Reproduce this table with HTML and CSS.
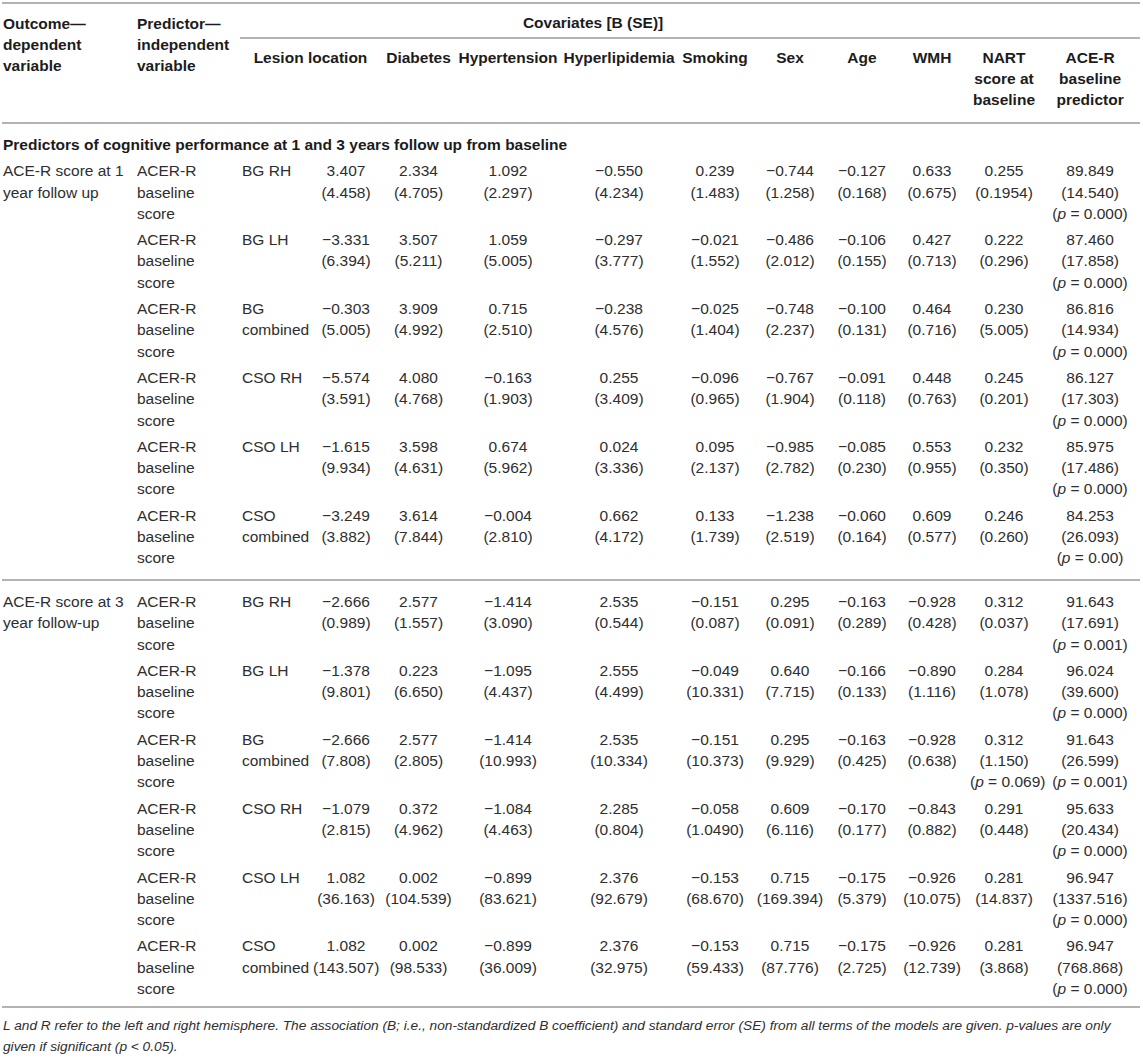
FILE: index.html
```html
<!DOCTYPE html>
<html lang="en">
<head>
<meta charset="utf-8">
<title>Predictors of cognitive performance</title>
<link rel="stylesheet" href="styles.css">
</head>
<body>
<div class="wrap">
<table class="data">
<colgroup>
<col class="c1"><col class="c2"><col class="c3"><col class="c4"><col class="c5"><col class="c6"><col class="c7"><col class="c8"><col class="c9"><col class="c10"><col class="c11"><col class="c12"><col class="c13">
</colgroup>
<thead>
<tr>
<th rowspan="2" class="h-left first">Outcome—<br>dependent<br>variable</th>
<th rowspan="2" class="h-left">Predictor—<br>independent<br>variable</th>
<th colspan="11" class="h-cov">Covariates [B (SE)]</th>
</tr>
<tr class="h-sub">
<th colspan="2">Lesion location</th>
<th>Diabetes</th>
<th>Hypertension</th>
<th>Hyperlipidemia</th>
<th>Smoking</th>
<th>Sex</th>
<th>Age</th>
<th>WMH</th>
<th>NART<br>score at<br>baseline</th>
<th>ACE-R<br>baseline<br>predictor</th>
</tr>
</thead>
<tbody>
<tr><td colspan="13" class="section first">Predictors of cognitive performance at 1 and 3 years follow up from baseline</td></tr>
<tr>
<td class="first">ACE-R score at 1<br>year follow up</td><td>ACER-R<br>baseline<br>score</td><td>BG RH</td>
<td class="num">3.407<br>(4.458)</td><td class="num">2.334<br>(4.705)</td><td class="num">1.092<br>(2.297)</td><td class="num">−0.550<br>(4.234)</td><td class="num">0.239<br>(1.483)</td><td class="num">−0.744<br>(1.258)</td><td class="num">−0.127<br>(0.168)</td><td class="num">0.633<br>(0.675)</td><td class="num">0.255<br>(0.1954)</td><td class="num">89.849<br>(14.540)<br>(<i>p</i> = 0.000)</td>
</tr>
<tr>
<td class="first"></td><td>ACER-R<br>baseline<br>score</td><td>BG LH</td>
<td class="num">−3.331<br>(6.394)</td><td class="num">3.507<br>(5.211)</td><td class="num">1.059<br>(5.005)</td><td class="num">−0.297<br>(3.777)</td><td class="num">−0.021<br>(1.552)</td><td class="num">−0.486<br>(2.012)</td><td class="num">−0.106<br>(0.155)</td><td class="num">0.427<br>(0.713)</td><td class="num">0.222<br>(0.296)</td><td class="num">87.460<br>(17.858)<br>(<i>p</i> = 0.000)</td>
</tr>
<tr>
<td class="first"></td><td>ACER-R<br>baseline<br>score</td><td>BG<br>combined</td>
<td class="num">−0.303<br>(5.005)</td><td class="num">3.909<br>(4.992)</td><td class="num">0.715<br>(2.510)</td><td class="num">−0.238<br>(4.576)</td><td class="num">−0.025<br>(1.404)</td><td class="num">−0.748<br>(2.237)</td><td class="num">−0.100<br>(0.131)</td><td class="num">0.464<br>(0.716)</td><td class="num">0.230<br>(5.005)</td><td class="num">86.816<br>(14.934)<br>(<i>p</i> = 0.000)</td>
</tr>
<tr>
<td class="first"></td><td>ACER-R<br>baseline<br>score</td><td>CSO RH</td>
<td class="num">−5.574<br>(3.591)</td><td class="num">4.080<br>(4.768)</td><td class="num">−0.163<br>(1.903)</td><td class="num">0.255<br>(3.409)</td><td class="num">−0.096<br>(0.965)</td><td class="num">−0.767<br>(1.904)</td><td class="num">−0.091<br>(0.118)</td><td class="num">0.448<br>(0.763)</td><td class="num">0.245<br>(0.201)</td><td class="num">86.127<br>(17.303)<br>(<i>p</i> = 0.000)</td>
</tr>
<tr>
<td class="first"></td><td>ACER-R<br>baseline<br>score</td><td>CSO LH</td>
<td class="num">−1.615<br>(9.934)</td><td class="num">3.598<br>(4.631)</td><td class="num">0.674<br>(5.962)</td><td class="num">0.024<br>(3.336)</td><td class="num">0.095<br>(2.137)</td><td class="num">−0.985<br>(2.782)</td><td class="num">−0.085<br>(0.230)</td><td class="num">0.553<br>(0.955)</td><td class="num">0.232<br>(0.350)</td><td class="num">85.975<br>(17.486)<br>(<i>p</i> = 0.000)</td>
</tr>
<tr class="group-end">
<td class="first"></td><td>ACER-R<br>baseline<br>score</td><td>CSO<br>combined</td>
<td class="num">−3.249<br>(3.882)</td><td class="num">3.614<br>(7.844)</td><td class="num">−0.004<br>(2.810)</td><td class="num">0.662<br>(4.172)</td><td class="num">0.133<br>(1.739)</td><td class="num">−1.238<br>(2.519)</td><td class="num">−0.060<br>(0.164)</td><td class="num">0.609<br>(0.577)</td><td class="num">0.246<br>(0.260)</td><td class="num">84.253<br>(26.093)<br>(<i>p</i> = 0.00)</td>
</tr>
</tbody>
<tbody>
<tr class="group-start">
<td class="first">ACE-R score at 3<br>year follow-up</td><td>ACER-R<br>baseline<br>score</td><td>BG RH</td>
<td class="num">−2.666<br>(0.989)</td><td class="num">2.577<br>(1.557)</td><td class="num">−1.414<br>(3.090)</td><td class="num">2.535<br>(0.544)</td><td class="num">−0.151<br>(0.087)</td><td class="num">0.295<br>(0.091)</td><td class="num">−0.163<br>(0.289)</td><td class="num">−0.928<br>(0.428)</td><td class="num">0.312<br>(0.037)</td><td class="num">91.643<br>(17.691)<br>(<i>p</i> = 0.001)</td>
</tr>
<tr>
<td class="first"></td><td>ACER-R<br>baseline<br>score</td><td>BG LH</td>
<td class="num">−1.378<br>(9.801)</td><td class="num">0.223<br>(6.650)</td><td class="num">−1.095<br>(4.437)</td><td class="num">2.555<br>(4.499)</td><td class="num">−0.049<br>(10.331)</td><td class="num">0.640<br>(7.715)</td><td class="num">−0.166<br>(0.133)</td><td class="num">−0.890<br>(1.116)</td><td class="num">0.284<br>(1.078)</td><td class="num">96.024<br>(39.600)<br>(<i>p</i> = 0.000)</td>
</tr>
<tr>
<td class="first"></td><td>ACER-R<br>baseline<br>score</td><td>BG<br>combined</td>
<td class="num">−2.666<br>(7.808)</td><td class="num">2.577<br>(2.805)</td><td class="num">−1.414<br>(10.993)</td><td class="num">2.535<br>(10.334)</td><td class="num">−0.151<br>(10.373)</td><td class="num">0.295<br>(9.929)</td><td class="num">−0.163<br>(0.425)</td><td class="num">−0.928<br>(0.638)</td><td class="num">0.312<br>(1.150)<br>(<i>p</i> = 0.069)</td><td class="num">91.643<br>(26.599)<br>(<i>p</i> = 0.001)</td>
</tr>
<tr>
<td class="first"></td><td>ACER-R<br>baseline<br>score</td><td>CSO RH</td>
<td class="num">−1.079<br>(2.815)</td><td class="num">0.372<br>(4.962)</td><td class="num">−1.084<br>(4.463)</td><td class="num">2.285<br>(0.804)</td><td class="num">−0.058<br>(1.0490)</td><td class="num">0.609<br>(6.116)</td><td class="num">−0.170<br>(0.177)</td><td class="num">−0.843<br>(0.882)</td><td class="num">0.291<br>(0.448)</td><td class="num">95.633<br>(20.434)<br>(<i>p</i> = 0.000)</td>
</tr>
<tr>
<td class="first"></td><td>ACER-R<br>baseline<br>score</td><td>CSO LH</td>
<td class="num">1.082<br>(36.163)</td><td class="num">0.002<br>(104.539)</td><td class="num">−0.899<br>(83.621)</td><td class="num">2.376<br>(92.679)</td><td class="num">−0.153<br>(68.670)</td><td class="num">0.715<br>(169.394)</td><td class="num">−0.175<br>(5.379)</td><td class="num">−0.926<br>(10.075)</td><td class="num">0.281<br>(14.837)</td><td class="num">96.947<br>(1337.516)<br>(<i>p</i> = 0.000)</td>
</tr>
<tr class="table-end">
<td class="first"></td><td>ACER-R<br>baseline<br>score</td><td>CSO<br>combined</td>
<td class="num">1.082<br>(143.507)</td><td class="num">0.002<br>(98.533)</td><td class="num">−0.899<br>(36.009)</td><td class="num">2.376<br>(32.975)</td><td class="num">−0.153<br>(59.433)</td><td class="num">0.715<br>(87.776)</td><td class="num">−0.175<br>(2.725)</td><td class="num">−0.926<br>(12.739)</td><td class="num">0.281<br>(3.868)</td><td class="num">96.947<br>(768.868)<br>(<i>p</i> = 0.000)</td>
</tr>
</tbody>
</table>
<p class="note">L and R refer to the left and right hemisphere. The association (B; i.e., non-standardized B coefficient) and standard error (SE) from all terms of the models are given. p-values are only<br>given if significant (p &lt; 0.05).</p>
</div>
</body>
</html>
```

FILE: styles.css
```css
body {
  margin: 0;
  background: #ffffff;
  color: #2e2e2e;
  font-family: "Liberation Sans", Arial, sans-serif;
}

.wrap {
  padding: 2px 3px 0 2px;
}

.data {
  width: 1138px;
  table-layout: fixed;
  border-collapse: separate;
  border-spacing: 0;
  font-size: 15.5px;
  line-height: 21.3px;
}

.c1 { width: 133px; }
.c2 { width: 105px; }
.c3 { width: 71px; }
.c4 { width: 70px; }
.c5 { width: 75px; }
.c6 { width: 104px; }
.c7 { width: 118px; }
.c8 { width: 74px; }
.c9 { width: 76px; }
.c10 { width: 68px; }
.c11 { width: 72px; }
.c12 { width: 72px; }
.c13 { width: 100px; }

th,
td {
  padding: 2px 2px 3px;
  vertical-align: top;
  white-space: nowrap;
  text-align: left;
}

th {
  font-weight: bold;
  color: #1c1c1c;
  line-height: 21px;
}

.first {
  padding-left: 1px;
}

.h-left {
  padding-top: 8.5px;
  padding-bottom: 0;
  border-top: 2px solid #b3b3b3;
  border-bottom: 2px solid #b3b3b3;
}

.h-cov {
  text-align: center;
  padding: 7.5px 196px 4.5px 2px;
  border-top: 2px solid #b3b3b3;
  border-bottom: 2px solid #b3b3b3;
}

.h-sub th {
  text-align: center;
  padding: 7.5px 2px 12.5px;
  border-bottom: 2px solid #b3b3b3;
}

.section {
  font-weight: bold;
  color: #1c1c1c;
  padding-top: 9.5px;
  padding-bottom: 3.5px;
}

.num {
  text-align: center;
}

.group-end td {
  padding-bottom: 10.3px;
  border-bottom: 2px solid #b3b3b3;
}

.group-start td {
  padding-top: 10px;
}

.table-end td {
  padding-bottom: 6.5px;
  border-bottom: 2px solid #b3b3b3;
}

.note {
  margin: 7.5px 0 0 1px;
  font-style: italic;
  font-size: 13.7px;
  line-height: 21px;
  color: #2e2e2e;
  white-space: nowrap;
}
```
